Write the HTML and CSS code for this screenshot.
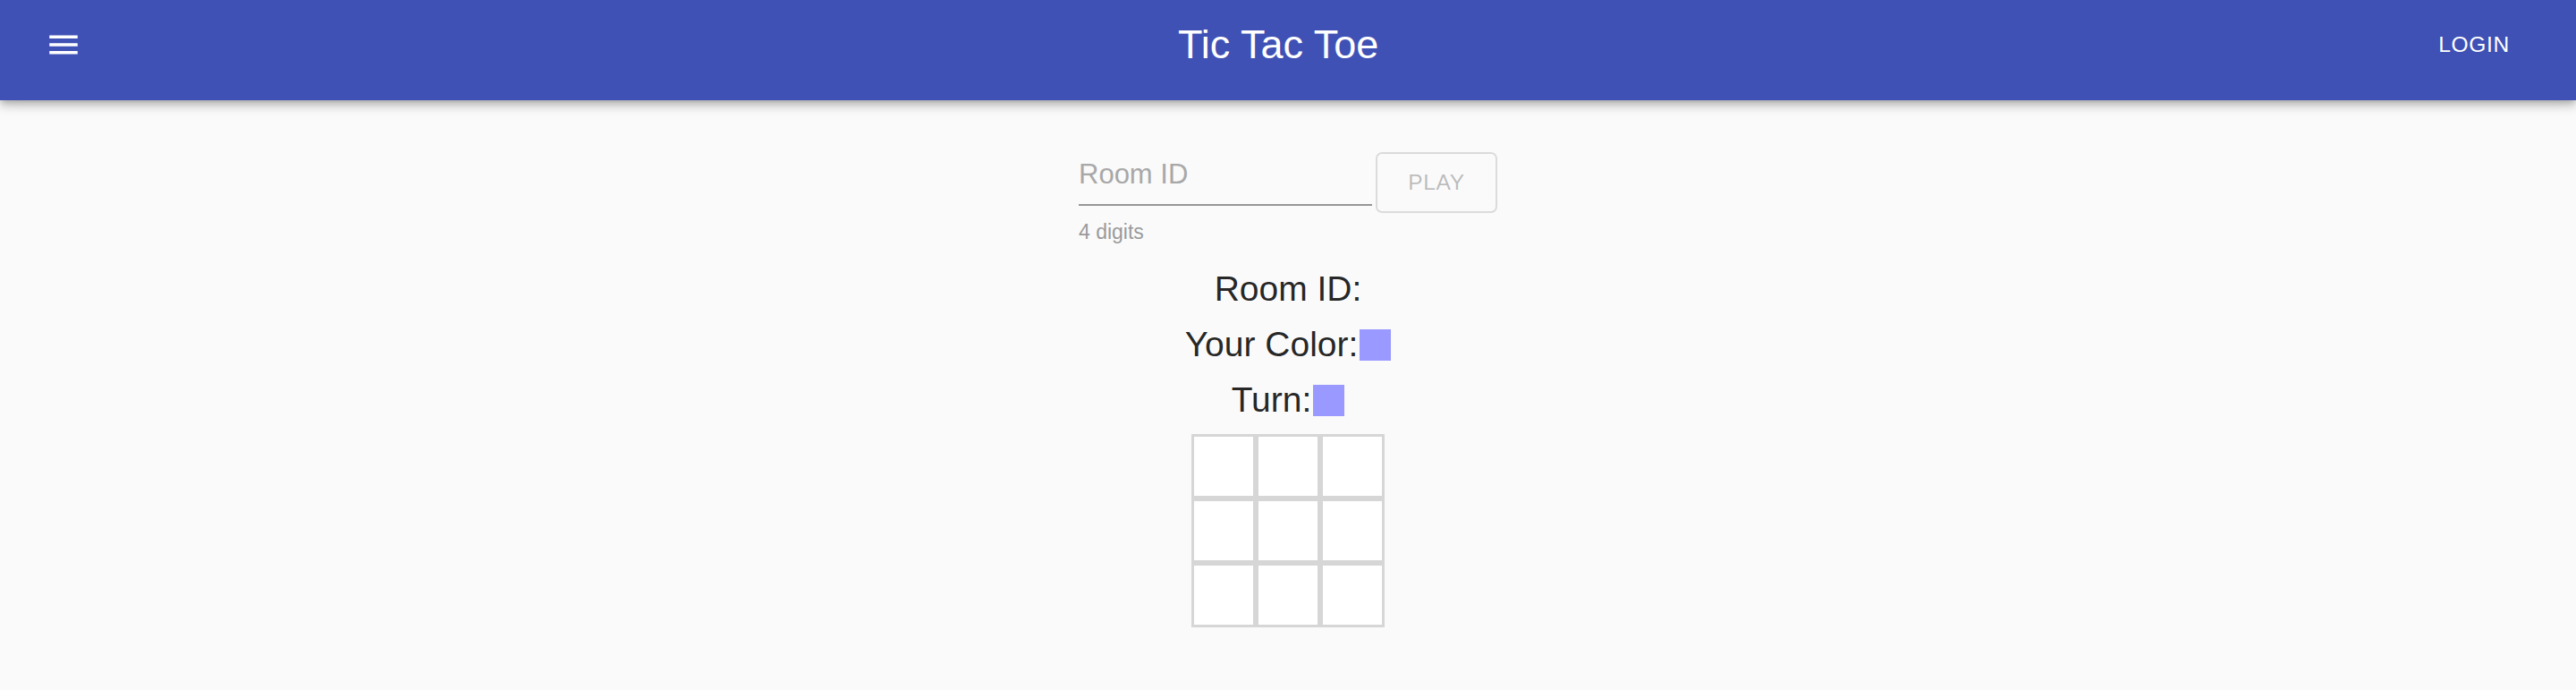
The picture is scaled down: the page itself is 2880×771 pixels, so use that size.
FILE: index.html
```html
<!DOCTYPE html>
<html lang="en">
<head>
<meta charset="utf-8">
<title>Tic Tac Toe</title>
<link rel="stylesheet" href="styles.css">
</head>
<body>
<header class="appbar">
  <button class="menu-btn" aria-label="Menu">
    <svg class="menu-icon" viewBox="0 0 24 24"><path d="M3 18h18v-2H3v2zm0-5h18v-2H3v2zm0-7v2h18V6H3z" fill="#fff"/></svg>
  </button>
  <h1 class="title">Tic Tac Toe</h1>
  <button class="login-btn">Login</button>
</header>
<main class="main">
  <div class="join">
    <div class="field">
      <input class="room-input" type="text" placeholder="Room ID">
      <div class="helper">4 digits</div>
    </div>
    <button class="play-btn" disabled>Play</button>
  </div>
  <div class="info">
    <div class="line">Room ID:</div>
    <div class="line">Your Color:<span class="swatch"></span></div>
    <div class="line">Turn:<span class="swatch"></span></div>
  </div>
  <div class="board">
    <div class="cell"></div><div class="cell"></div><div class="cell"></div>
    <div class="cell"></div><div class="cell"></div><div class="cell"></div>
    <div class="cell"></div><div class="cell"></div><div class="cell"></div>
  </div>
</main>
</body>
</html>
```
FILE: styles.css
```css
* { box-sizing: border-box; }
html, body { margin: 0; padding: 0; }
body {
  background: #fafafa;
  font-family: "Liberation Sans", Arial, Helvetica, sans-serif;
  color: rgba(0,0,0,0.87);
}
.appbar {
  height: 112px;
  background: #3f51b5;
  color: #fff;
  display: flex;
  align-items: center;
  padding: 0 53px 12px 29px;
  box-shadow: 0 3px 7px -2px rgba(0,0,0,0.2), 0 7px 9px 0 rgba(0,0,0,0.14), 0 2px 18px 0 rgba(0,0,0,0.12);
  position: relative;
  z-index: 1;
}
.menu-btn {
  background: none;
  border: none;
  padding: 21px;
  margin-right: 40px;
  display: flex;
  cursor: pointer;
}
.menu-icon { width: 42px; height: 42px; display: block; }
.title {
  flex: 1;
  margin: 0;
  text-align: center;
  font-size: 45px;
  font-weight: 400;
}
.login-btn {
  background: none;
  border: none;
  color: #fff;
  font-family: "Liberation Sans", Arial, sans-serif;
  font-size: 24.5px;
  font-weight: 400;
  text-transform: uppercase;
  letter-spacing: 0.7px;
  padding: 14px 21px;
}
.main {
  display: flex;
  flex-direction: column;
  align-items: center;
}
.join {
  display: flex;
  align-items: flex-start;
  gap: 4px;
  margin-top: 58px;
}
.field { width: 328px; display: flex; flex-direction: column; }
.room-input {
  height: 60px;
  border: none;
  border-bottom: 2px solid rgba(0,0,0,0.4);
  background: transparent;
  font-family: "Liberation Sans", Arial, sans-serif;
  font-size: 31px;
  padding: 0 0 8px 0;
  outline: none;
  color: rgba(0,0,0,0.87);
}
.room-input::placeholder { color: #a8a8a8; opacity: 1; }
.helper {
  margin-top: 17px;
  font-size: 23px;
  line-height: 24px;
  color: #9a9a9a;
}
.play-btn {
  width: 136px;
  height: 68px;
  border: 2px solid rgba(0,0,0,0.12);
  border-radius: 7px;
  background: transparent;
  font-family: "Liberation Sans", Arial, sans-serif;
  font-size: 24.5px;
  letter-spacing: 0.7px;
  text-transform: uppercase;
  color: rgba(0,0,0,0.26);
}
.info {
  margin-top: 21px;
  display: flex;
  flex-direction: column;
  align-items: center;
}
.line {
  font-size: 39px;
  line-height: 62px;
  color: rgba(0,0,0,0.87);
  display: flex;
  align-items: center;
}
.swatch {
  width: 35px;
  height: 35px;
  background: #9999ff;
  display: inline-block;
  margin-left: 2px;
}
.board {
  margin-top: 7px;
  display: grid;
  grid-template-columns: repeat(3, 72px);
  grid-template-rows: repeat(3, 72px);
}
.cell {
  background: #fff;
  border: 3px solid #d6d6d6;
}
```
